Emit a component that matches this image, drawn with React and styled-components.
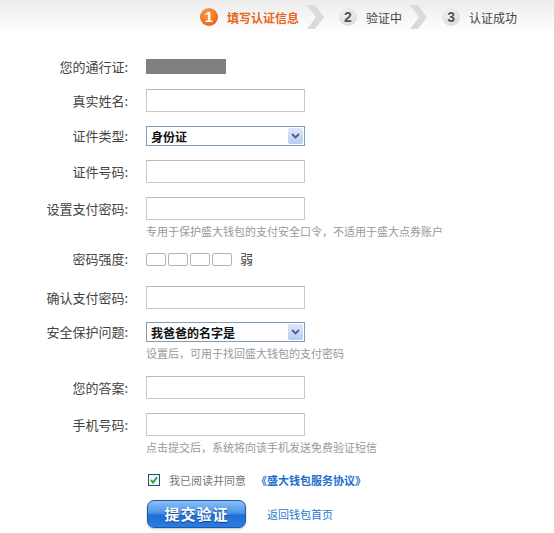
import React from "react";
import styled, { createGlobalStyle } from "styled-components";

//Styles
const GlobalStyle = createGlobalStyle`
  body {
    margin: 0;
    background: #fff;
    font-family: "Noto Sans CJK SC", "Noto Sans", sans-serif;
    color: #333;
  }
`;

const Page = styled.div`
  width: 554px;
  height: 533px;
  overflow: hidden;
`;

const StepBar = styled.div`
  display: flex;
  align-items: center;
  height: 34px;
  padding-left: 200px;
  background: linear-gradient(#ececec, #fafafa 70%, #fff);
`;

const Step = styled.div`
  display: flex;
  align-items: center;
  gap: 9px;
  font-size: 12px;
  font-weight: ${({ active }) => (active ? "bold" : "normal")};
  color: ${({ active }) => (active ? "#e8641b" : "#444")};
`;

const StepNum = styled.span`
  width: 18px;
  height: 18px;
  border-radius: 50%;
  display: flex;
  align-items: center;
  justify-content: center;
  font-family: "Liberation Sans", Arial, sans-serif;
  font-size: 14px;
  font-weight: bold;
  color: ${({ active }) => (active ? "#fff" : "#555")};
  background: ${({ active }) =>
    active
      ? "radial-gradient(circle at 40% 30%, #ff9a4a, #e0560c)"
      : "radial-gradient(circle at 40% 30%, #f2f2f2, #d6d6d6)"};
`;

const Chevron = styled.svg`
  margin: 0 14px 0 6px;
`;

const Form = styled.div`
  display: flex;
  flex-direction: column;
  padding-top: 25px;
`;

const Row = styled.div`
  display: flex;
  align-items: ${({ top }) => (top ? "flex-start" : "center")};
  margin-top: ${({ mt }) => mt || 0}px;
`;

const Label = styled.div`
  width: 128px;
  flex: none;
  text-align: right;
  font-size: 13px;
  color: #444;
  margin-right: 18px;
  line-height: ${({ lh }) => lh || 23}px;
`;

const Field = styled.div`
  display: flex;
  flex-direction: column;
`;

const Masked = styled.div`
  width: 80px;
  height: 15px;
  background: #808080;
`;

const Input = styled.div`
  box-sizing: border-box;
  width: 159px;
  height: 23px;
  border: 1px solid #c9c9c9;
  border-top-color: #b9b9b9;
  background: #fff;
`;

const Select = styled.div`
  box-sizing: border-box;
  width: 159px;
  height: 20px;
  border: 1px solid #7f9db9;
  display: flex;
  align-items: center;
  justify-content: space-between;
  padding: 0 1px 0 4px;
  font-size: 12px;
  font-weight: bold;
  color: #111;
`;

const SelectBtn = styled.span`
  width: 15px;
  height: 16px;
  border-radius: 2px;
  background: linear-gradient(#dfe8fb, #b8cbf4);
  display: flex;
  align-items: center;
  justify-content: center;
`;

const Hint = styled.div`
  font-size: 11px;
  line-height: 14px;
  color: #999;
  margin-top: 4px;
  white-space: nowrap;
`;

const Strength = styled.div`
  display: flex;
  align-items: center;
  gap: 2px;
  font-size: 13px;
  line-height: 20px;
  color: #444;
`;

const StrengthBox = styled.span`
  box-sizing: border-box;
  width: 20px;
  height: 13px;
  border: 1px solid #b4b4b4;
  border-radius: 2px;
`;

const StrengthText = styled.span`
  margin-left: 6px;
`;

const Agree = styled.div`
  display: flex;
  align-items: center;
  height: 14px;
  line-height: 14px;
  margin-left: 148px;
  margin-top: 19px;
  font-size: 11px;
  color: #777;
`;

const Check = styled.span`
  box-sizing: border-box;
  width: 12px;
  height: 12px;
  border: 1px solid #1c5180;
  background: #f4f4f4;
  display: flex;
  align-items: center;
  justify-content: center;
  margin-right: 9px;
`;

const Link = styled.a`
  color: ${({ strong }) => (strong ? "#1f6fcf" : "#2a78d0")};
  font-weight: ${({ strong }) => (strong ? "bold" : "normal")};
  text-decoration: none;
  font-size: 11px;
  margin-left: ${({ ml }) => ml || 0}px;
`;

const Actions = styled.div`
  display: flex;
  align-items: center;
  margin-left: 147px;
  margin-top: 13px;
`;

const Submit = styled.button`
  width: 99px;
  height: 28px;
  border: 1px solid #1858b0;
  border-radius: 7px;
  background: linear-gradient(#8cc0f4 0%, #4d95e6 45%, #1f6fd6 55%, #2b7de0 100%);
  color: #fff;
  font-family: "Noto Sans CJK SC", sans-serif;
  font-size: 15px;
  line-height: 26px;
  font-weight: bold;
  letter-spacing: 1px;
  padding: 0;
  text-shadow: 0 1px 1px #12418a;
  box-shadow: 0 1px 2px rgba(0, 0, 0, 0.25);
`;

const ArrowDown = () => (
  <svg width="9" height="6" viewBox="0 0 9 6">
    <path d="M1 1 L4.5 4.5 L8 1" fill="none" stroke="#4a5f8a" strokeWidth="1.8" />
  </svg>
);

const StepArrow = () => (
  <Chevron width="20" height="24" viewBox="0 0 20 24">
    <path d="M2 0 H10 L19 12 L10 24 H2 L11 12 Z" fill="#dadada" />
  </Chevron>
);

const App = () => {
  return (
    <Page>
      <GlobalStyle />
      <StepBar>
        <Step active>
          <StepNum active>1</StepNum>填写认证信息
        </Step>
        <StepArrow />
        <Step>
          <StepNum>2</StepNum>验证中
        </Step>
        <StepArrow />
        <Step>
          <StepNum>3</StepNum>认证成功
        </Step>
      </StepBar>
      <Form>
        <Row>
          <Label lh={15}>您的通行证:</Label>
          <Masked />
        </Row>
        <Row mt={15}>
          <Label>真实姓名:</Label>
          <Input />
        </Row>
        <Row mt={14}>
          <Label lh={20}>证件类型:</Label>
          <Select>
            身份证
            <SelectBtn>
              <ArrowDown />
            </SelectBtn>
          </Select>
        </Row>
        <Row mt={14}>
          <Label>证件号码:</Label>
          <Input />
        </Row>
        <Row mt={14} top>
          <Label>设置支付密码:</Label>
          <Field>
            <Input />
            <Hint>专用于保护盛大钱包的支付安全口令，不适用于盛大点券账户</Hint>
          </Field>
        </Row>
        <Row mt={11}>
          <Label lh={20}>密码强度:</Label>
          <Strength>
            <StrengthBox />
            <StrengthBox />
            <StrengthBox />
            <StrengthBox />
            <StrengthText>弱</StrengthText>
          </Strength>
        </Row>
        <Row mt={17}>
          <Label>确认支付密码:</Label>
          <Input />
        </Row>
        <Row mt={13} top>
          <Label lh={20}>安全保护问题:</Label>
          <Field>
            <Select>
              我爸爸的名字是
              <SelectBtn>
                <ArrowDown />
              </SelectBtn>
            </Select>
            <Hint>设置后，可用于找回盛大钱包的支付密码</Hint>
          </Field>
        </Row>
        <Row mt={16}>
          <Label>您的答案:</Label>
          <Input />
        </Row>
        <Row mt={14} top>
          <Label>手机号码:</Label>
          <Field>
            <Input />
            <Hint>点击提交后，系统将向该手机发送免费验证短信</Hint>
          </Field>
        </Row>
      </Form>
      <Agree>
        <Check>
          <svg width="8" height="8" viewBox="0 0 8 8">
            <path d="M1 4 L3 6.5 L7 1.2" fill="none" stroke="#21a121" strokeWidth="1.8" />
          </svg>
        </Check>
        我已阅读并同意
        <Link href="#" strong ml={10}>
          《盛大钱包服务协议》
        </Link>
      </Agree>
      <Actions>
        <Submit>提交验证</Submit>
        <Link href="#" ml={21}>
          返回钱包首页
        </Link>
      </Actions>
    </Page>
  );
};

export default App;
